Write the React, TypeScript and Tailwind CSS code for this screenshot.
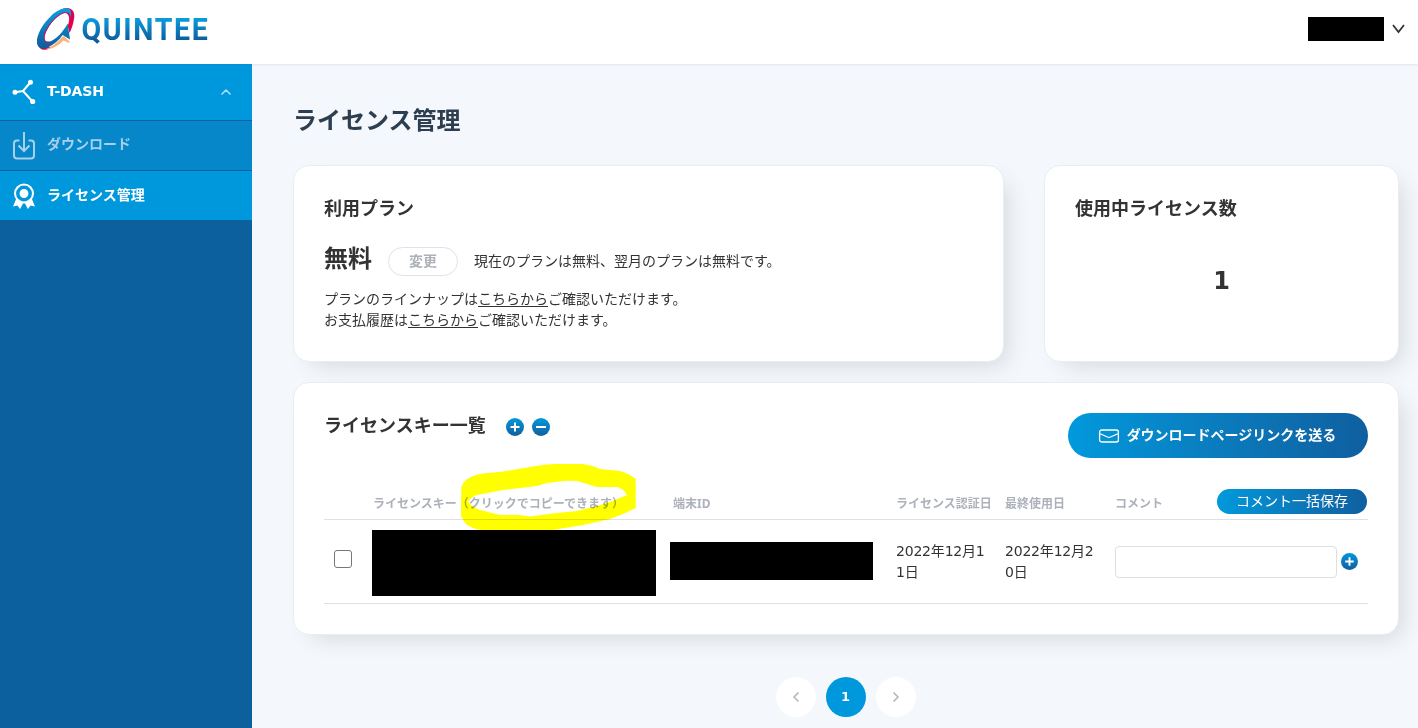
import React, { useState } from 'react';
import { ChevronLeft, ChevronRight, ChevronUp } from 'lucide-react';

const Logo = () => (
  <svg width="190" height="54" viewBox="0 0 190 54" className="block">
    <defs>
      <linearGradient id="ringBlue" x1="0" y1="0" x2="0" y2="1">
        <stop offset="0" stopColor="#0a9fe0" />
        <stop offset="1" stopColor="#0d5c9c" />
      </linearGradient>
      <linearGradient id="textBlue" gradientUnits="userSpaceOnUse" x1="0" y1="17" x2="0" y2="41">
        <stop offset="0" stopColor="#0a9fe0" />
        <stop offset="1" stopColor="#0d5c9c" />
      </linearGradient>
    </defs>
    {/* Ring */}
    <path d="M29 8.500C38 6 41.500 12 40 19C39 25 37.500 29 35.500 33L33.700 26C36 20 36 14 31 13Z" fill="#e5004f" />
    <path d="M4 43C5 51 12 51.500 18 47L12 46.500Z" fill="#e5004f" />
    <path d="M27 38L30 36L36.500 42.500L34 42.500L29.500 40.500C24 46 18 49.500 11 49.500C18 46.500 23 43 27 38Z" fill="#f6b57f" />
    <path
      d="M36 9.500C32 6.500 24 9.500 17.500 15.500C9 23.500 2 35 3 43C4.200 49.500 9 49.500 14.500 47C20 44.500 25 40 28.700 35L36 39.500L33.700 23.500C29 32 22 39.500 16 41.500C9.500 43 9 37 13.500 29C18 20.500 26 13.500 31.500 12.500C35 12 36.500 14 36 18C37.500 14.500 37.500 11.500 36 9.500Z"
      fill="url(#ringBlue)"
    />
    <path d="M15.500 42C9 43.500 8.500 37 13 29C17.500 20.500 25.500 13.500 31 12.500" fill="none" stroke="#e5004f" strokeWidth="1" />
    <text
      x="47.500"
      y="39.700"
      fontSize="31"
      fontWeight="700"
      textLength="128"
      lengthAdjust="spacingAndGlyphs"
      letterSpacing="1.800"
      fill="url(#textBlue)"
      style={{ fontFamily: 'Roboto, "Open Sans", sans-serif' }}
    >
      QUINTEE
    </text>
  </svg>
);

const DashIcon = () => (
  <svg width="24" height="26" viewBox="0 0 24 26" className="shrink-0">
    <path d="M3 13.200L11 12L18.300 3.500M11 12L20.500 22.500" stroke="#fff" strokeWidth="2" fill="none" />
    <circle cx="3" cy="13.300" r="2.500" fill="#fff" />
    <circle cx="18.500" cy="3.200" r="2.500" fill="#fff" />
    <circle cx="20.700" cy="22.500" r="2.600" fill="#fff" />
  </svg>
);

const DownloadIcon = () => (
  <svg width="24" height="28" viewBox="0 0 24 28" fill="none" stroke="currentColor" strokeWidth="2" className="shrink-0">
    <path d="M7.500 8.500H5C3 8.500 2 9.500 2 11.500V23.500C2 25.500 3 26.500 5 26.500H19C21 26.500 22 25.500 22 23.500V11.500C22 9.500 21 8.500 19 8.500H16.500" />
    <path d="M12 0V19M6.500 13.500L12 19L17.500 13.500" />
  </svg>
);

const BadgeIcon = () => (
  <svg width="24" height="26" viewBox="0 0 24 26" className="shrink-0">
    <path d="M4.500 15L1 23.500L5.300 22.500L8.200 26L11.500 19.500H12.500L15.800 26L18.700 22.500L23 23.500L19.500 15Z" fill="#fff" />
    <circle cx="12" cy="10.500" r="10" fill="#fff" />
    <circle cx="12" cy="10.500" r="6.200" fill="none" stroke="#0098dc" strokeWidth="3.500" />
  </svg>
);

const MailIcon = () => (
  <svg width="22" height="14" viewBox="0 0 22 14" fill="none" stroke="#fff" strokeWidth="1.300">
    <rect x="1.600" y="1" width="18.800" height="12" rx="2" />
    <path d="M1.600 4.500L9.500 8Q11 8.600 12.500 8L20.400 4.500" />
  </svg>
);

const RoundIcon = ({ minus = false, size = 18 }: { minus?: boolean; size?: number }) => (
  <button className="flex shrink-0 rounded-full bg-linear-to-b from-[#0099dc] to-[#0f5f9f]">
    <svg width={size} height={size} viewBox="0 0 18 18" stroke="#fff" strokeWidth="2">
      <path d={minus ? 'M4 9H14' : 'M4.500 9H13.500M9 4.500V13.500'} />
    </svg>
  </button>
);

// Marker stroke around the copy hint
const Marker = () => (
  <svg
    width="176"
    height="68"
    viewBox="461 463 176 68"
    className="pointer-events-none absolute -top-[33px] left-[88px] mix-blend-multiply"
  >
    <path
      fill="#ffff00"
      fillRule="evenodd"
      d="M461.300 487Q464 480 470 477.500Q478 473 490 473L507 471L530 467Q546 464 557 464H583Q592 465 600 469L620 471Q630 474 635.700 479V508L623 514L610 519L583 525L553 530H480Q470 528 465 523L461 516ZM468 502Q471 497 477 495L503 490L537 486Q547 482 557 481.700Q568 480 577 481L597 487H617Q624 489 627 495L610 502L597 506L577 511L557 513L530 516.500L520 515H500L480 510Q472 507 468 502Z"
    />
  </svg>
);

const Card: React.FC<{ className?: string; children: React.ReactNode }> = ({ className = '', children }) => (
  <section
    className={`rounded-2xl border border-[#e8edf5] bg-white px-[30px] shadow-[10px_10px_24px_-8px_rgba(0,0,0,0.14)] ${className}`}
  >
    {children}
  </section>
);

export default function App() {
  const [checked, setChecked] = useState(false);
  const [comment, setComment] = useState('');

  return (
    <div className="flex h-[728px] w-[1418px] flex-col overflow-hidden bg-[#f4f7fc] text-sm text-[#333] [font-family:'Noto_Sans','Noto_Sans_CJK_JP',sans-serif]">
      {/* Header */}
      <header className="z-10 flex h-16 shrink-0 items-center justify-between bg-white pl-[34px] pr-3 shadow-[0_1px_2px_rgba(40,60,100,0.09)]">
        <div className="h-16">
          <Logo />
        </div>
        <div className="-mt-1.5 flex items-center gap-2">
          <div className="h-6 w-[76px] bg-black" />
          <svg width="14" height="10" viewBox="0 0 14 10" fill="none" stroke="#333" strokeWidth="1.800">
            <path d="M1 1L6.500 8L12 1" />
          </svg>
        </div>
      </header>

      <div className="flex flex-1">
        {/* Sidebar */}
        <nav className="w-[252px] shrink-0 bg-[#0d609e] font-bold text-white">
          <div className="flex h-[57px] items-center border-b border-[#0d609e] bg-[#0098dc] pl-3 pr-[18px]">
            <DashIcon />
            <span className="mb-0.5 ml-[11px] flex-1 text-sm [font-family:'DejaVu_Sans',sans-serif] tracking-[-0.1px]">T-DASH</span>
            <ChevronUp size={16} strokeWidth={2.500} className="text-[#a9dcf4]" />
          </div>
          <div className="flex h-[50px] items-center border-b border-[#0d609e] bg-[#0587c9] pl-3 text-[#a9d0ea]">
            <DownloadIcon />
            <span className="mb-1 ml-[11px]">ダウンロード</span>
          </div>
          <div className="flex h-[49px] items-center bg-[#0098dc] pl-3">
            <BadgeIcon />
            <span className="mb-0.5 ml-[11px]">ライセンス管理</span>
          </div>
        </nav>

        <main className="flex flex-1 flex-col pl-[41px] pr-[19px] pt-[38px]">
          <h1 className="h-9 text-2xl leading-9 font-bold text-[#2c3e50]">ライセンス管理</h1>

          <div className="mt-[27px] flex justify-between">
            <Card className="h-[197px] w-[711px] pt-7">
              <h2 className="text-lg leading-7 font-bold">利用プラン</h2>
              <div className="mt-5 flex h-[38px] items-center">
                <span className="mb-1.5 text-2xl font-bold">無料</span>
                <button className="ml-4 h-[29px] w-[70px] rounded-full border border-[#dce3ed] text-sm font-bold text-[#acb1ba]">変更</button>
                <span className="ml-4">現在のプランは無料、翌月のプランは無料です。</span>
              </div>
              <p className="mt-2 leading-[21px]">
                プランのラインナップは<a className="underline underline-offset-2">こちらから</a>ご確認いただけます。
                <br />
                お支払履歴は<a className="underline underline-offset-2">こちらから</a>ご確認いただけます。
              </p>
            </Card>
            <Card className="h-[197px] w-[355px] pt-7">
              <h2 className="text-lg leading-7 font-bold">使用中ライセンス数</h2>
              <p className="mt-[41px] text-center text-2xl leading-9 font-bold [font-family:'DejaVu_Sans',sans-serif]">1</p>
            </Card>
          </div>

          <Card className="mt-5 h-[253px] pt-[30px]">
            <div className="flex h-[45px] items-center">
              <h2 className="mb-[21px] text-lg leading-6 font-bold">ライセンスキー一覧</h2>
              <div className="mb-[18px] ml-5 flex gap-2">
                <RoundIcon />
                <RoundIcon minus />
              </div>
              <button className="ml-auto flex h-[45px] w-[300px] items-center justify-center gap-[7px] rounded-full bg-linear-to-r from-[#0099dc] to-[#0f5f9f] pr-0.5 font-bold text-white">
                <MailIcon />
                <span className="mb-0.5">ダウンロードページリンクを送る</span>
              </button>
            </div>

            {/* License table */}
            <div className="mt-[29px] grid h-[33px] grid-cols-[49px_300px_223px_109px_110px_253px] items-center border-b border-[#dcdfe8] text-xs font-bold text-[#acb1ba]">
              <span />
              <span className="relative mt-0.5 whitespace-nowrap">
                ライセンスキー（クリックでコピーできます）
                <Marker />
              </span>
              <span className="mt-0.5">端末ID</span>
              <span className="mt-0.5">ライセンス認証日</span>
              <span className="mt-0.5">最終使用日</span>
              <div className="flex items-center justify-between pr-px">
                <span className="mt-0.5">コメント</span>
                <button className="mb-1 h-[25px] w-[150px] rounded-full bg-linear-to-r from-[#0099dc] to-[#0f5f9f] text-sm font-normal text-white">コメント一括保存</button>
              </div>
            </div>
            <div className="grid h-[84px] grid-cols-[48px_298px_226px_109px_110px_253px] items-center border-b border-[#dcdfe8]">
              <input
                type="checkbox"
                checked={checked}
                onChange={(e) => setChecked(e.target.checked)}
                className="mb-1.5 ml-2.5 size-[18px] appearance-none rounded-[3px] border border-[#767676] bg-white checked:bg-[#0098dc]"
              />
              <div className="relative mt-[3px] h-[66px] w-[284px] bg-black" />
              <div className="mb-px h-[38px] w-[203px] bg-black" />
              <span className="w-[92px] leading-[21px] break-all [font-family:'DejaVu_Sans','Noto_Sans_CJK_JP',sans-serif] tracking-[-0.2px]">2022年12月11日</span>
              <span className="w-[92px] leading-[21px] break-all [font-family:'DejaVu_Sans','Noto_Sans_CJK_JP',sans-serif] tracking-[-0.2px]">2022年12月20日</span>
              <div className="flex items-center gap-1">
                <input
                  value={comment}
                  onChange={(e) => setComment(e.target.value)}
                  className="h-8 w-[222px] rounded border border-[#dcdfe8] px-2"
                />
                <RoundIcon size={17} />
              </div>
            </div>
          </Card>

          {/* Pagination */}
          <div className="mt-[42px] flex justify-center gap-2.5 pr-[1px] text-[#b0b5be]">
            <button className="flex size-10 items-center justify-center rounded-full bg-white">
              <ChevronLeft size={16} strokeWidth={2.500} />
            </button>
            <button className="size-10 rounded-full bg-[#0098dc] text-[13px] font-bold text-white [font-family:'DejaVu_Sans',sans-serif]">1</button>
            <button className="flex size-10 items-center justify-center rounded-full bg-white">
              <ChevronRight size={16} strokeWidth={2.500} />
            </button>
          </div>
        </main>
      </div>
    </div>
  );
}
